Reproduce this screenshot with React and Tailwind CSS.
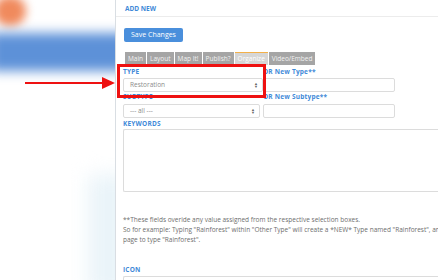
import React from 'react';

const tabs = ['Main', 'Layout', 'Map It!', 'Publish?', 'Organize', 'Video/Embed'];

function Label({ children, className = '' }) {
  return (
    <p className={'text-[6.5px] leading-[8px] font-bold text-[#3f8ad8] tracking-[0.2px] ' + className}>
      {children}
    </p>
  );
}

function Select({ value, className = '' }) {
  return (
    <div className={'h-[14px] border border-[#dcdcdc] rounded-[2px] bg-white flex items-center justify-between pl-[6px] pr-[4px] ' + className}>
      <span className="text-[6.5px] text-[#8c8c8c]">{value}</span>
      <span className="flex flex-col text-[4px] leading-[3px] text-[#666]">
        <span>▲</span>
        <span>▼</span>
      </span>
    </div>
  );
}

export default function App() {
  return (
    <div className="relative flex w-[438px] h-[280px] overflow-hidden bg-white font-['Open_Sans',sans-serif]">
      {/* blurred page behind the panel */}
      <div className="relative w-[115px] shrink-0 overflow-hidden">
        <div className="absolute left-[-6px] top-[-4px] w-[32px] h-[30px] rounded-full bg-[#f08a5d] blur-[5px]" />
        <div className="absolute left-[-10px] top-[33px] w-[140px] h-[38px] bg-[#5d91d8] blur-[6px]" />
        <div className="absolute left-[88px] top-[175px] w-[50px] h-[120px] bg-[#eaf4f9] blur-[10px]" />
      </div>

      <div className="flex-1 border-l border-[#d9dee3] bg-white">
        <div className="h-[17px] border-b border-[#ececec] pl-[9px] pt-[5px]">
          <p className="text-[6.5px] leading-[8px] font-bold text-[#3f8ad8]">ADD NEW</p>
        </div>

        <div className="pl-[7px]">
          <button className="mt-[11px] ml-[1px] w-[59px] h-[14px] rounded-[2px] bg-[#4a8fdc] text-white text-[7px] leading-[14px]">
            Save Changes
          </button>

          <div className="mt-[9px] ml-[2px] flex gap-px">
            {tabs.map((t) =>
              t === 'Organize' ? (
                <div key={t} className="h-[13px] px-[3px] bg-[#d6d6d6] border-t border-[#f3b04a] text-[6.5px] leading-[12px] text-white">
                  {t}
                </div>
              ) : (
                <div key={t} className="h-[13px] px-[3px] bg-[#a5a5a5] text-[6.5px] leading-[13px] text-[#f2f2f2]">
                  {t}
                </div>
              )
            )}
          </div>

          <div className="mt-[3px] grid grid-cols-[137px_132px] gap-x-[3px]">
            <div>
              <Label>TYPE</Label>
              <Select value="Restoration" className="mt-[2px] w-[140px]" />
            </div>
            <div>
              <Label>OR New Type**</Label>
              <div className="mt-[2px] h-[14px] border border-[#dcdcdc] rounded-[2px]" />
            </div>
            <div className="mt-[1px]">
              <Label>SUBTYPE</Label>
              <Select value="--- all ---" className="mt-[3px]" />
            </div>
            <div className="mt-[1px]">
              <Label>OR New Subtype**</Label>
              <div className="mt-[3px] h-[14px] border border-[#dcdcdc] rounded-[2px]" />
            </div>
          </div>

          <Label className="mt-[2px]">KEYWORDS</Label>
          <div className="mt-[1px] h-[63px] border border-[#dcdcdc] border-r-0 rounded-l-[2px]" />

          <div className="mt-[23px] text-[6.5px] leading-[10px] text-[#6e6e6e] whitespace-nowrap">
            <p>**These fields overide any value assigned from the respective selection boxes.</p>
            <p>So for example: Typing "Rainforest" within "Other Type" will create a *NEW* Type named "Rainforest", and update this</p>
            <p>page to type "Rainforest".</p>
          </div>

          <Label className="mt-[21px]">ICON</Label>
          <div className="mt-[2px] h-[14px] border border-[#dcdcdc] border-r-0 rounded-l-[2px]" />
        </div>
      </div>

      {/* callout over the form */}
      <div className="absolute left-[117px] top-[64px] w-[149px] h-[34px] border-[3px] border-[#ee1111]" />
      <svg className="absolute left-[25px] top-[77px]" width="91" height="12" viewBox="0 0 91 12">
        <line x1="0" y1="6" x2="80" y2="6" stroke="#ee1111" strokeWidth="2" />
        <polygon points="77,0 90,6 77,12" fill="#ee1111" />
      </svg>
    </div>
  );
}
